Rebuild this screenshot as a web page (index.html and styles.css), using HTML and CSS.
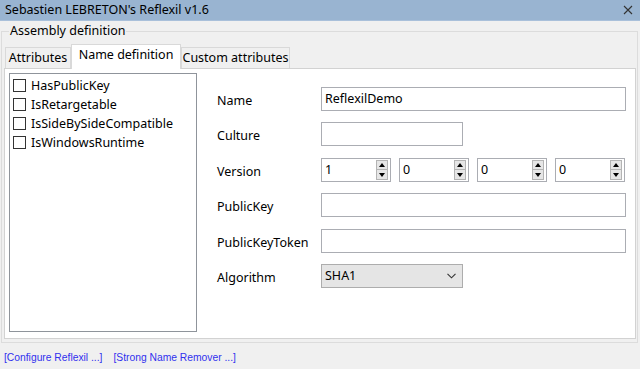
FILE: index.html
```html
<!DOCTYPE html>
<html lang="en">
<head>
    <meta charset="UTF-8">
    <title>Reflexil</title>
    <link rel="stylesheet" href="styles.css">
</head>
<body>
<div class="titlebar">
    <span class="caption">Sebastien LEBRETON's Reflexil v1.6</span>
    <svg class="close" width="10" height="10" viewBox="0 0 10 10">
        <path d="M1 1 L9 9 M9 1 L1 9" stroke="#333" stroke-width="1.1" fill="none"/>
    </svg>
</div>
<fieldset class="group">
    <legend>Assembly definition</legend>
    <div class="tabs">
        <div class="tab tab-attr">Attributes</div>
        <div class="tab tab-name active">Name definition</div>
        <div class="tab tab-custom">Custom attributes</div>
    </div>
    <div class="panel">
        <ul class="flags">
            <li><span class="check"></span>HasPublicKey</li>
            <li><span class="check"></span>IsRetargetable</li>
            <li><span class="check"></span>IsSideBySideCompatible</li>
            <li><span class="check"></span>IsWindowsRuntime</li>
        </ul>
        <div class="form">
            <label>Name</label>
            <div class="field wide">ReflexilDemo</div>

            <label>Culture</label>
            <div class="field short"></div>

            <label>Version</label>
            <div class="version">
                <div class="spin"><span class="val">1</span><span class="arrows"><i class="up"></i><i class="down"></i></span></div>
                <div class="spin"><span class="val">0</span><span class="arrows"><i class="up"></i><i class="down"></i></span></div>
                <div class="spin"><span class="val">0</span><span class="arrows"><i class="up"></i><i class="down"></i></span></div>
                <div class="spin"><span class="val">0</span><span class="arrows"><i class="up"></i><i class="down"></i></span></div>
            </div>

            <label>PublicKey</label>
            <div class="field wide"></div>

            <label>PublicKeyToken</label>
            <div class="field wide"></div>

            <label>Algorithm</label>
            <div class="select">
                <span>SHA1</span>
                <svg width="9" height="6" viewBox="0 0 9 6">
                    <path d="M0.5 0.8 L4.5 4.8 L8.5 0.8" stroke="#333" stroke-width="1.1" fill="none"/>
                </svg>
            </div>
        </div>
    </div>
</fieldset>
<div class="links">
    <a href="javascript:;">[Configure Reflexil ...]</a>
    <a href="javascript:;">[Strong Name Remover ...]</a>
</div>
</body>
</html>
```

FILE: styles.css
```css
* {
    margin: 0;
    padding: 0;
    box-sizing: border-box;
}

ul, li {
    list-style: none;
}

body {
    width: 640px;
    height: 369px;
    overflow: hidden;
    background-color: #f0f0f0;
    font-family: "Noto Sans", "DejaVu Sans", sans-serif;
    font-size: 12.5px;
    color: #000;
}

.titlebar {
    display: flex;
    align-items: center;
    justify-content: space-between;
    height: 21px;
    padding: 0 7px 0 5px;
    background-color: #99b4d1;
    border-bottom: 1px solid #a9c0da;
}

.caption {
    line-height: 16px;
}

.group {
    margin: 2px 2px 0 1px;
    padding: 0 1px 3px 2px;
    border: 1px solid #dcdcdc;
}

.group legend {
    margin-left: 5px;
    padding: 0 1px;
    line-height: 16px;
}

.tabs {
    display: flex;
    align-items: flex-end;
    height: 24px;
    margin-top: 5px;
    padding-left: 1px;
}

.tab {
    height: 21px;
    line-height: 19px;
    text-align: center;
    background-color: #f0f0f0;
    border: 1px solid #d9d9d9;
    border-bottom: none;
}

.tab-attr {
    width: 66px;
}

.tab-name {
    width: 110px;
}

.tab-custom {
    width: 109px;
}

.tab.active {
    position: relative;
    z-index: 1;
    height: 25px;
    margin-bottom: -1px;
    line-height: 20px;
    background-color: #fff;
}

.panel {
    display: flex;
    height: 271px;
    padding: 4px 4px 6px 4px;
    background-color: #fff;
    border: 1px solid #d2d2d2;
}

.flags {
    width: 188px;
    padding-top: 2px;
    border: 1px solid #8f949b;
}

.flags li {
    display: flex;
    align-items: center;
    height: 19px;
    padding-left: 3px;
}

.check {
    width: 13px;
    height: 13px;
    margin-right: 5px;
    border: 1px solid #333;
    background-color: #fff;
}

.form {
    display: grid;
    grid-template-columns: 104px 305px;
    grid-auto-rows: 24px;
    row-gap: 11.4px;
    align-self: flex-start;
    margin: 14px 0 0 20px;
}

.form label {
    padding-top: 4px;
    line-height: 20px;
}

.field {
    height: 24px;
    padding: 0 3px;
    line-height: 22px;
    background-color: #fff;
    border: 1px solid #abadb3;
}

.field.short {
    width: 142px;
}

.version {
    display: flex;
    gap: 8px;
}

.spin {
    display: flex;
    align-items: center;
    width: 70px;
    height: 24px;
    padding: 1px 2px 1px 2px;
    background-color: #fff;
    border: 1px solid #abadb3;
}

.spin .val {
    flex: 1;
    padding-left: 1px;
    line-height: 20px;
}

.arrows {
    display: flex;
    flex-direction: column;
    width: 12px;
    height: 20px;
}

.arrows i {
    display: flex;
    align-items: center;
    justify-content: center;
    flex: 1;
    background-color: #e6e6e6;
    border: 1px solid #b4b4b4;
}

.arrows i + i {
    border-top: none;
}

.arrows .up::after {
    content: "";
    border-left: 3px solid transparent;
    border-right: 3px solid transparent;
    border-bottom: 4px solid #000;
}

.arrows .down::after {
    content: "";
    border-left: 3px solid transparent;
    border-right: 3px solid transparent;
    border-top: 4px solid #000;
}

.select {
    display: flex;
    align-items: center;
    justify-content: space-between;
    width: 142px;
    height: 24px;
    padding: 0 6px 0 3px;
    background-color: #e5e5e5;
    border: 1px solid #adadad;
}

.links {
    display: flex;
    gap: 11px;
    padding: 8px 0 0 4px;
    font-family: "Liberation Sans", Arial, sans-serif;
    font-size: 10.3px;
    line-height: 14px;
}

.links a {
    color: #3131ee;
    text-decoration: none;
}
```
